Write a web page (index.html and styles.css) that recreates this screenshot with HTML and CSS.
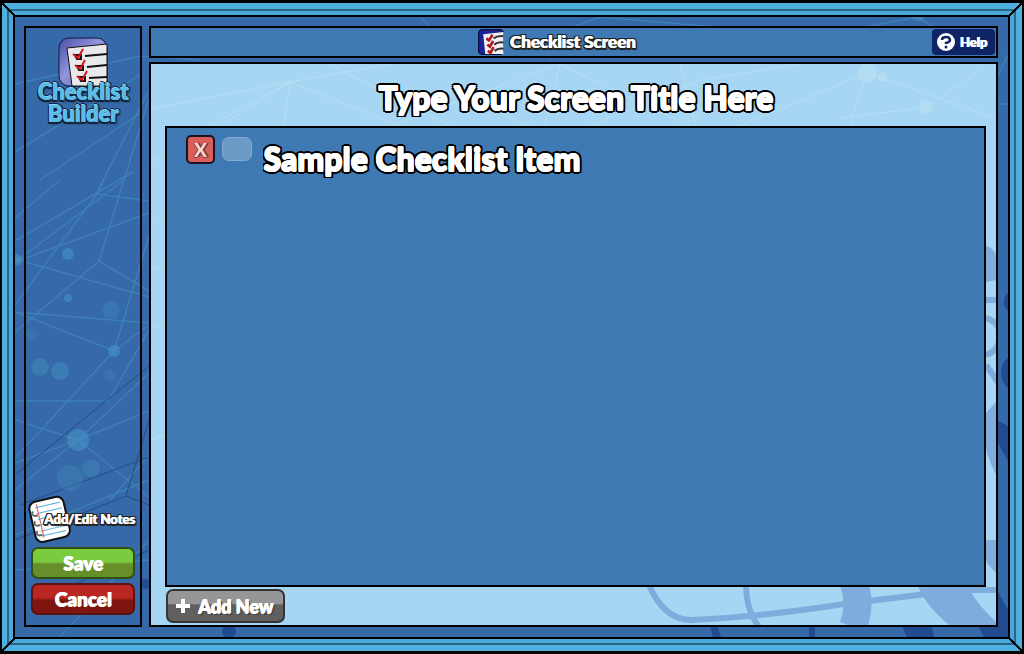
FILE: index.html
```
<!DOCTYPE html>
<html lang="en">
<head>
    <meta charset="UTF-8">
    <meta name="viewport" content="width=device-width, initial-scale=1.0">
    <title>Checklist Builder</title>
    <link rel="stylesheet" href="styles.css">
</head>
<body>
    <div class="frame">
        <span class="corner corner-tl"></span>
        <span class="corner corner-tr"></span>
        <span class="corner corner-bl"></span>
        <span class="corner corner-br"></span>
        <div class="stage">
            <svg class="backdrop" viewBox="15 17 993 620" preserveAspectRatio="xMidYMid slice" aria-hidden="true">
                <g stroke="#4c9fd0" stroke-opacity=".4" stroke-width="1.5" fill="none">
                    <path d="M15 84L140 56L200 60M15 152L140 75M40 180L142 112M98 190L148 92M121 190L149 98M15 218L60 180M15 241L95 194L133 172M15 262L124 180M15 305L97 194L104 180M97 194L149 201M15 262L149 213M124 180L99 261L15 332M99 261L149 291M15 259L149 297M15 312L149 323M15 312L114 351L149 325M149 236L114 351L15 458M149 330L108 401H15M15 420L78 440L149 411M15 463L78 440L15 490M78 440L149 373M78 440L149 497M15 535L149 480M60 637L149 540M110 500L149 455M15 570L149 560"/>
                    <path d="M420 17Q432 26 425 28M570 28L600 17L730 28M860 28L918 17L935 28M998 75L1008 55M985 104H1008M550 61L560 66"/>
                </g>
                <path d="M15 475L149 366M20 505L149 457M149 420L126 496L149 505M126 496L15 540M40 600L149 550" stroke="#264b88" fill="none"/>
                <g fill="#4a9acb" fill-opacity=".5">
                    <circle cx="68" cy="254" r="6"/><circle cx="68" cy="298" r="4"/><circle cx="111" cy="310" r="9" opacity=".5"/><circle cx="32" cy="335" r="6" opacity=".4"/>
                    <circle cx="40" cy="367" r="9" opacity=".7"/><circle cx="60" cy="371" r="9" opacity=".8"/><circle cx="114" cy="351" r="6"/><circle cx="110" cy="375" r="6" opacity=".4"/>
                    <circle cx="78" cy="440" r="11"/><circle cx="91" cy="468" r="9" opacity=".6"/><circle cx="70" cy="478" r="13" opacity=".5"/><circle cx="16" cy="260" r="6"/><circle cx="918" cy="14" r="7"/>
                </g>
                <g fill="#214a8f">
                    <circle cx="1016" cy="302" r="12"/><circle cx="1021" cy="373" r="20"/>
                    <path d="M998 421Q1008 425 1008 427V461L998 443zM902 626H932L934 637H907zM978 626L998 598V592L1008 610V637H984zM710 626H717L721 637H713zM809 626H815V637H809z"/>
                    <circle cx="145" cy="584" r="5"/><circle cx="229" cy="631" r="7"/>
                </g>
            </svg>

            <aside class="sidebar">
                <div class="logo">
                    <svg class="logo-icon" viewBox="0 0 50 50" aria-hidden="true">
                        <defs>
                            <linearGradient id="badge" x2="1" y2="1">
                                <stop offset="0" stop-color="#4a4fa4"/>
                                <stop offset=".45" stop-color="#9294dc"/>
                                <stop offset="1" stop-color="#4c51a8"/>
                            </linearGradient>
                        </defs>
                        <rect x="1" y="1" width="48" height="48" rx="10" fill="url(#badge)" stroke="#111a3f"/>
                        <path d="M9 11L49 7V49H14z" fill="#e9e9ec" stroke="#111"/>
                        <path d="M27 19L49 17M29 30L49 28M31 41L49 40" stroke="#111" stroke-width="2"/>
                        <path d="M17 18H23V22H19zM19 29H25V33H21zM21 40H27V44H23z" fill="none" stroke="#111" stroke-width="2"/>
                        <path d="M15 17L20 21L25 12M17 28L22 32L27 23M19 39L24 43L29 34" fill="none" stroke="#d8131b" stroke-width="2"/>
                    </svg>
                    <div class="logo-text">
                        <div>Checklist</div>
                        <div>Builder</div>
                    </div>
                </div>

                <div class="actions">
                    <button class="notes-button" type="button">
                        <svg class="notes-icon" viewBox="0 0 44 48" aria-hidden="true">
                            <g transform="rotate(-13 22 24)">
                                <rect x="5" y="4" width="35" height="41" rx="7" fill="#fff" stroke="#111" stroke-width="2"/>
                                <path d="M11 10H36M11 16H37M11 22H37M11 28H37M11 34H37M11 39H36" stroke="#55aede"/>
                                <path d="M13 7V41" stroke="#e25850"/>
                                <path d="M8 13Q5 16 9 18H12M8 23Q5 26 9 28H12M8 33Q5 36 9 38H12" fill="none" stroke="#666" stroke-width="2"/>
                            </g>
                        </svg>
                        <span>Add/Edit Notes</span>
                    </button>
                    <button class="button save" type="button">Save</button>
                    <button class="button cancel" type="button">Cancel</button>
                </div>
            </aside>

            <div class="workspace">
                <header class="topbar">
                    <div class="screen-name">
                        <svg class="screen-icon" viewBox="0 0 50 50" aria-hidden="true">
                            <rect x="1" y="1" width="48" height="48" rx="9" fill="#1a2294" stroke="#0b103f" stroke-width="3"/>
                            <path d="M10 10L49 6V48H14z" fill="#f0f0f2"/>
                            <path d="M30 18Q38 12 49 14M31 30Q38 24 49 26M32 42Q39 36 49 38" fill="none" stroke="#333" stroke-width="4"/>
                            <path d="M16 18L21 22L28 11M18 30L23 34L29 23M19 42L24 46L30 35" fill="none" stroke="#b3161b" stroke-width="5"/>
                        </svg>
                        <span>Checklist Screen</span>
                    </div>
                    <button class="help-button" type="button">
                        <svg class="help-icon" viewBox="0 0 18 18" aria-hidden="true">
                            <circle cx="9" cy="9" r="9" fill="#fff"/>
                            <path d="M5 7Q5 4 9 4Q13 4 13 7Q13 9 9 10V11" fill="none" stroke="#0f2464" stroke-width="2.5"/>
                            <circle cx="9" cy="14" r="1.5" fill="#0f2464"/>
                        </svg>
                        <span>Help</span>
                    </button>
                </header>

                <main class="editor">
                    <svg class="backdrop" viewBox="151 64 845 561" preserveAspectRatio="xMidYMid slice" aria-hidden="true">
                        <g stroke="#c2e6ef" stroke-opacity=".6" fill="none">
                            <path d="M151 109L290 82L390 64M165 150L290 82L400 126M290 82L284 126M290 82L220 126M330 64L450 126M390 126L560 64L690 126M450 90L530 126M560 64L545 126M590 126L700 80L800 64M680 64L696 126M740 126L866 73L996 118M866 73L850 126M926 107L980 70M926 107L840 118M151 162L165 156M151 226L165 215M151 270L165 263M151 330L165 322M151 440L165 435"/>
                        </g>
                        <g fill="#b9e0ef" fill-opacity=".6">
                            <circle cx="867" cy="73" r="10"/><circle cx="926" cy="107" r="7"/><circle cx="883" cy="77" r="5"/><circle cx="693" cy="112" r="10" opacity=".5"/><circle cx="535" cy="80" r="12" opacity=".3"/>
                        </g>
                        <g fill="none" stroke="#80acdd" stroke-width="6">
                            <path d="M649 585Q664 620 692 620Q760 617 844 604L960 590H996M746 585Q746 610 759 627"/>
                            <path d="M986 300H996M986 318Q1000 322 1000 335Q1000 350 986 355M986 365L1000 385"/>
                            <path d="M853 580Q862 604 853 627" stroke-width="28"/>
                        </g>
                        <path d="M918 586H968Q975 602 996 622V625H949Q925 605 918 586zM986 246Q996 249 996 258V280L986 282zM996 402V475Q978 440 986 413zM986 540H996V573Q986 563 986 560z" fill="#80acdd"/>
                    </svg>
                    <input class="title-input" type="text" value="Type Your Screen Title Here" aria-label="Screen title">
                    <ul class="checklist">
                        <li class="item">
                            <button class="remove-button" type="button" aria-label="Remove item">X</button>
                            <input class="tick" type="checkbox" aria-label="Done">
                            <input class="item-input" type="text" value="Sample Checklist Item" aria-label="Checklist item">
                        </li>
                    </ul>
                    <button class="add-button" type="button">
                        <svg class="plus-icon" viewBox="0 0 14 14" aria-hidden="true">
                            <path d="M5 0H9V5H14V9H9V14H5V9H0V5H5z" fill="#fff"/>
                        </svg>
                        <span>Add New</span>
                    </button>
                </main>
            </div>
        </div>
    </div>
</body>
</html>
```

FILE: styles.css
```
* {
    box-sizing: border-box;
}

body {
    margin: 0;
    padding: 3px 2px;
    height: 100vh;
    background-color: #000;
    color: #fff;
    font-family: "Lato", sans-serif;
    font-weight: 900;
    overflow: hidden;
}

button,
input {
    font-family: inherit;
    font-weight: inherit;
    color: inherit;
}

button {
    cursor: pointer;
}

.frame {
    position: relative;
    height: 100%;
    background-color: #4eb0e1;
    padding: 12px 12px 12px 11px;
    display: flex;
}

/* the two shadows draw the inner rail and the groove round it */
.stage {
    position: relative;
    flex: 1;
    display: flex;
    gap: 7px;
    padding: 9px 10px 10px 9px;
    background-color: #3569a7;
    border: 2px solid #000;
    box-shadow: 0 0 0 4px #4aa9da, 0 0 0 6px #2a6584;
}

/* mitred joints of the frame */
.corner {
    position: absolute;
    z-index: 2;
    width: 13px;
    height: 13px;
}

.corner-tl,
.corner-br {
    background: linear-gradient(to top right, transparent 44%, #000 45%, #000 55%, transparent 56%);
}

.corner-tr,
.corner-bl {
    background: linear-gradient(to bottom right, transparent 44%, #000 45%, #000 55%, transparent 56%);
}

.corner-tl {
    top: 0;
    left: 0;
}

.corner-tr {
    top: 0;
    right: 0;
}

.corner-bl {
    bottom: 0;
    left: 0;
}

.corner-br {
    bottom: 0;
    right: 0;
}

.backdrop {
    position: absolute;
    inset: 0;
    width: 100%;
    height: 100%;
}

.sidebar {
    position: relative;
    width: 118px;
    border: 2px solid #000;
    padding: 9px 5px 10px;
    display: flex;
    flex-direction: column;
    justify-content: space-between;
}

.logo {
    display: flex;
    flex-direction: column;
    align-items: center;
}

.logo-icon {
    width: 50px;
    height: 50px;
}

.logo-text {
    position: relative;
    margin-top: -6px;
    font-size: 22px;
    line-height: 22px;
    text-align: center;
    color: #5cbce8;
    text-shadow: 1px 0 #5cbce8, 0 -1px #8ed5f3, 2px 0 #132238, -1px 0 #132238, 0 2px #132238, 0 -2px #132238, 2px -1px #132238, -1px 2px #132238, 2px 2px 2px #132238;
}

.actions {
    display: flex;
    flex-direction: column;
    gap: 4px;
}

.notes-button {
    display: flex;
    align-items: center;
    padding: 0;
    border: none;
    background: none;
    font-size: 13px;
    white-space: nowrap;
}

.notes-icon {
    flex: none;
    width: 44px;
    height: 48px;
    margin-left: -4px;
}

.notes-button span {
    position: relative;
    margin-left: -27px;
}

.notes-button,
.screen-name {
    text-shadow: 1px 0 #fff, 2px 0 #222, -1px 0 #222, 0 2px #222, 0 -1px #222, 2px 1px #222, 2px -1px #222, -1px 1px #222, -1px -1px #222, 2px 2px 1px #222;
}

.button {
    height: 32px;
    padding: 0;
    border-radius: 7px;
    font-size: 19px;
    line-height: 28px;
    text-shadow: 1px 0 #fff, 0 1px #fff;
}

.save {
    border: 2px solid #2d5214;
    background: linear-gradient(#7bcb3e 45%, #668e2b 55%);
}

.cancel {
    border: 2px solid #5d1110;
    background: linear-gradient(#b92722 45%, #7e150f 55%);
}

.workspace {
    position: relative;
    flex: 1;
    min-width: 0;
    display: flex;
    flex-direction: column;
    gap: 4px;
}

.topbar {
    height: 32px;
    border: 2px solid #000;
    background-color: #3f79b4;
    display: grid;
    grid-template-columns: 1fr auto 1fr;
    align-items: center;
}

.screen-name {
    grid-column: 2;
    display: flex;
    align-items: center;
    gap: 6px;
    margin-right: 34px;
    font-size: 17px;
    line-height: 26px;
}

.screen-icon {
    width: 26px;
    height: 26px;
}

.help-button {
    justify-self: end;
    display: flex;
    align-items: center;
    gap: 4px;
    height: 26px;
    margin-right: 1px;
    padding: 0 8px 0 5px;
    border: none;
    border-radius: 4px;
    background-color: #0f2464;
    font-size: 13px;
    text-shadow: 1px 0 #fff;
}

.help-icon {
    width: 18px;
    height: 18px;
}

.editor {
    position: relative;
    flex: 1;
    display: flex;
    flex-direction: column;
    padding: 10px 10px 2px 14px;
    border: 2px solid #000;
    background-color: #a6d6f4;
}

.title-input,
.item-input {
    position: relative;
    min-width: 0;
    height: 46px;
    border: none;
    background: none;
    outline: none;
    font-size: 32px;
    text-shadow: 1px 0 #fff, 0 1px #fff, 1px 1px #fff, 0 -1px #fff, 1px -1px #fff, 3px 0 #000, -2px 0 #000, 0 3px #000, 0 -3px #000, 1px 3px #000, 1px -3px #000, 3px 2px #000, 3px -2px #000, -2px 2px #000, -2px -2px #000;
}

.title-input {
    width: 100%;
    margin-bottom: 6px;
    padding: 0;
    text-align: center;
}

.checklist {
    position: relative;
    flex: 1;
    margin: 0 0 2px;
    padding: 7px 19px;
    border: 2px solid #000;
    background-color: #3f79b4;
    list-style: none;
}

.item {
    display: flex;
    align-items: flex-start;
    gap: 7px;
}

.remove-button {
    width: 29px;
    height: 29px;
    padding: 0;
    border: 2px solid #1b1320;
    border-radius: 5px;
    background-color: #d85e5c;
    color: #f9d8d0;
    font-size: 19px;
    line-height: 25px;
    text-shadow: 2px 0 #7d3537, -1px 0 #7d3537, 0 1px #7d3537;
}

.tick {
    appearance: none;
    width: 30px;
    height: 24px;
    margin: 2px 0 0;
    border: 1px solid #82aad0;
    border-radius: 7px;
    background-color: #6b9ac6;
}

.tick:checked {
    background-color: #7bcb3e;
}

.item-input {
    flex: 1;
    padding: 0 4px;
}

.add-button {
    position: relative;
    align-self: flex-start;
    display: flex;
    align-items: center;
    gap: 8px;
    height: 34px;
    margin-left: 1px;
    padding: 0 10px 0 8px;
    border: 2px solid #343434;
    border-radius: 7px;
    background: linear-gradient(#969696 42%, #606060 46%);
    font-size: 18px;
    text-shadow: 1px 0 #fff, 0 1px #fff, 2px 2px 1px #444;
}

.plus-icon {
    width: 14px;
    height: 14px;
}
```
